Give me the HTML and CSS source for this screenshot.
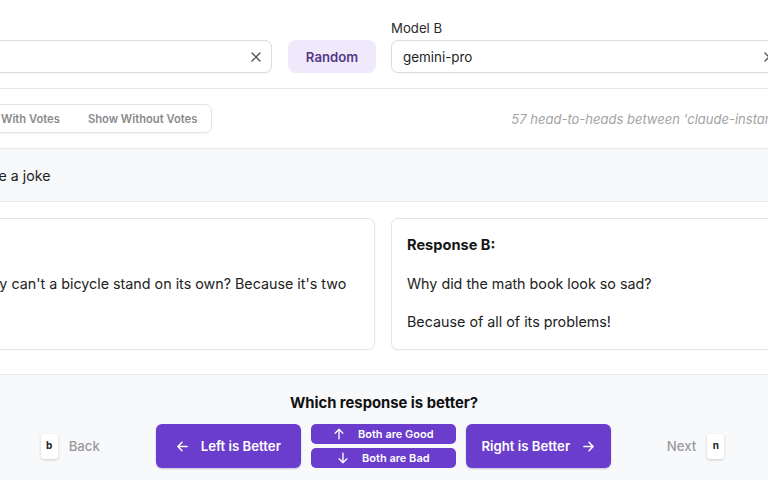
FILE: index.html
```html
<!DOCTYPE html>
<html lang="en">
<head>
<meta charset="utf-8">
<title>Head-to-head</title>
<link rel="stylesheet" href="styles.css">
</head>
<body>
<div class="page">
  <section class="top">
    <div class="top-row">
      <div class="field field-a">
        <div class="label">Model A</div>
        <div class="select">
          <span class="value">claude-instant-1</span>
          <svg class="clear" viewBox="0 0 12 12" width="12" height="12"><path d="M2 2 L10 10 M10 2 L2 10" /></svg>
        </div>
      </div>
      <button class="btn-random">Random</button>
      <div class="field field-b">
        <div class="label">Model B</div>
        <div class="select">
          <span class="value">gemini-pro</span>
          <svg class="clear" viewBox="0 0 12 12" width="12" height="12"><path d="M2 2 L10 10 M10 2 L2 10" /></svg>
        </div>
      </div>
    </div>
  </section>

  <section class="filters">
    <div class="filter-row">
      <div class="tabs">
        <span class="tab">Show With Votes</span>
        <span class="tab">Show Without Votes</span>
      </div>
      <span class="count">57 head-to-heads between 'claude-instant-1' and 'gemini-pro'</span>
    </div>
  </section>

  <section class="prompt">
    <div class="prompt-text">Tell me a joke</div>
  </section>

  <section class="responses">
    <div class="cards">
      <div class="card card-a">
        <p class="resp">Why can't a bicycle stand on its own? Because it's two</p>
      </div>
      <div class="card card-b">
        <div class="resp-title">Response B:</div>
        <p class="resp">Why did the math book look so sad?</p>
        <p class="resp">Because of all of its problems!</p>
      </div>
    </div>
  </section>

  <section class="vote">
    <div class="question">Which response is better?</div>
    <div class="vote-row">
      <div class="nav nav-back"><kbd class="key">b</kbd><span class="nav-text">Back</span></div>
      <div class="buttons">
        <button class="btn-big">
          <svg viewBox="0 0 14 14" width="13" height="13"><path d="M12 7 H2 M6.5 2.5 L2 7 L6.5 11.5"/></svg>
          <span>Left is Better</span>
        </button>
        <div class="both">
          <button class="btn-small">
            <svg viewBox="0 0 14 14" width="12" height="12"><path d="M7 12.5 V1.5 M2.5 6 L7 1.5 L11.5 6"/></svg>
            <span>Both are Good</span>
          </button>
          <button class="btn-small">
            <svg viewBox="0 0 14 14" width="12" height="12"><path d="M7 1.5 V12.5 M2.5 8 L7 12.5 L11.5 8"/></svg>
            <span>Both are Bad</span>
          </button>
        </div>
        <button class="btn-big">
          <span>Right is Better</span>
          <svg viewBox="0 0 14 14" width="13" height="13"><path d="M2 7 H12 M7.5 2.5 L12 7 L7.5 11.5"/></svg>
        </button>
      </div>
      <div class="nav nav-next"><span class="nav-text">Next</span><kbd class="key">n</kbd></div>
    </div>
  </section>
</div>
</body>
</html>
```

FILE: styles.css
```css
* { box-sizing: border-box; }

html, body {
  margin: 0;
  padding: 0;
}

body {
  width: 768px;
  height: 480px;
  overflow: hidden;
  background: #ffffff;
  font-family: Inter, "Noto Sans", "Liberation Sans", sans-serif;
  color: #1c1c1e;
}

.page {
  width: 768px;
  height: 480px;
  display: flex;
  flex-direction: column;
}

/* ---------- top ---------- */
.top {
  padding: 20px 0 15px;
  border-bottom: 1px solid #e7e8ea;
}

.top-row {
  display: flex;
  align-items: flex-end;
  margin-left: -128px;
}

.field-a { width: 400px; flex: none; }
.field-b { width: 394px; flex: none; }

.label {
  font-size: 13.2px;
  line-height: 16px;
  color: #2a2a2a;
  margin-bottom: 4px;
}

.select {
  height: 33px;
  border: 1px solid #dcdde0;
  border-radius: 7px;
  background: #fff;
  display: flex;
  align-items: center;
  justify-content: space-between;
  padding: 0 9px 0 11px;
  box-shadow: 0 1px 2px rgba(0,0,0,0.04);
}

.value {
  font-size: 13.4px;
  color: #1e1e1e;
}

.clear {
  fill: none;
  stroke: #555;
  stroke-width: 1.4;
  stroke-linecap: round;
}

.btn-random {
  flex: none;
  width: 88px;
  height: 33px;
  margin: 0 15px 0 16px;
  border: none;
  border-radius: 8px;
  background: #efe9fb;
  color: #553a86;
  font-family: inherit;
  font-size: 13.2px;
  font-weight: 600;
}

/* ---------- filters ---------- */
.filters {
  padding: 15px 0;
  border-bottom: 1px solid #e9eaec;
}

.filter-row {
  display: flex;
  align-items: center;
  margin-left: -44px;
}

.tabs {
  display: flex;
  height: 29px;
  align-items: center;
  border: 1px solid #e3e4e7;
  border-radius: 7px;
  box-shadow: 0 1px 2px rgba(0,0,0,0.05);
  flex: none;
}

.tab {
  padding: 0 14px 0 14px;
  font-size: 11.2px;
  font-weight: 600;
  color: #8a8a8e;
  white-space: nowrap;
}

.tab:first-child { padding-left: 11px; }

.count {
  margin-left: 299px;
  font-size: 13px;
  font-style: italic;
  color: #a3a3a6;
  white-space: nowrap;
}

/* ---------- prompt ---------- */
.prompt {
  height: 53px;
  background: #f6f8f9;
  border-bottom: 1px solid #e9eaec;
  display: flex;
  align-items: center;
}

.prompt-text {
  margin-left: -41px;
  font-size: 14.2px;
  color: #1f1f1f;
  white-space: nowrap;
}

/* ---------- responses ---------- */
.responses {
  padding: 16px 0 24px;
  border-bottom: 1px solid #e9eaec;
}

.cards {
  display: grid;
  grid-template-columns: 414px 414px;
  gap: 16px;
  margin-left: -39px;
}

.card {
  height: 132px;
  border: 1px solid #e4e5e8;
  border-radius: 7px;
  background: #fff;
  padding: 16px 15px 0;
  box-shadow: 0 1px 2px rgba(0,0,0,0.03);
}

.resp-title {
  font-size: 14.6px;
  font-weight: 700;
  line-height: 20px;
  color: #151515;
}

.resp {
  margin: 19px 0 0;
  font-size: 14.3px;
  line-height: 20px;
  color: #222;
  white-space: nowrap;
}

.card-b .resp + .resp { margin-top: 18px; }

.card-a .resp { margin-top: 39px; }

/* ---------- vote ---------- */
.vote {
  flex: 1;
  background: #f8f9fb;
  padding-top: 19px;
}

.question {
  text-align: center;
  font-size: 14.8px;
  font-weight: 700;
  line-height: 18px;
  color: #111;
}

.vote-row {
  display: flex;
  justify-content: center;
  align-items: center;
  gap: 56px;
  margin-top: 12px;
  padding-right: 3px;
}

.nav {
  display: flex;
  align-items: center;
  gap: 11px;
}

.nav-text {
  font-size: 13.2px;
  font-weight: 500;
  color: #9a9a9e;
}

.key {
  display: inline-flex;
  align-items: center;
  justify-content: center;
  width: 17px;
  height: 25px;
  background: #fff;
  border-radius: 3px;
  box-shadow: 0 1px 3px rgba(0,0,0,0.18);
  font-family: inherit;
  font-size: 10px;
  font-weight: 700;
  color: #222;
  padding-bottom: 3px;
}

.buttons {
  display: flex;
  gap: 10px;
  align-items: center;
}

.btn-big {
  width: 145px;
  height: 44px;
  border: none;
  border-radius: 6px;
  background: #6a3dcc;
  color: #fff;
  font-family: inherit;
  font-size: 13.2px;
  font-weight: 600;
  display: flex;
  align-items: center;
  justify-content: center;
  gap: 12px;
  box-shadow: 0 1px 2px rgba(60,20,140,0.25);
}

.btn-big svg, .btn-small svg {
  fill: none;
  stroke: #fff;
  stroke-width: 1.6;
  stroke-linecap: round;
  stroke-linejoin: round;
}

.both {
  display: flex;
  flex-direction: column;
  gap: 4px;
}

.btn-small {
  width: 145px;
  height: 20px;
  border: none;
  border-radius: 5px;
  background: #6a3dcc;
  color: #fff;
  font-family: inherit;
  font-size: 11px;
  font-weight: 600;
  display: flex;
  align-items: center;
  justify-content: center;
  gap: 13px;
  padding: 0;
}
```
